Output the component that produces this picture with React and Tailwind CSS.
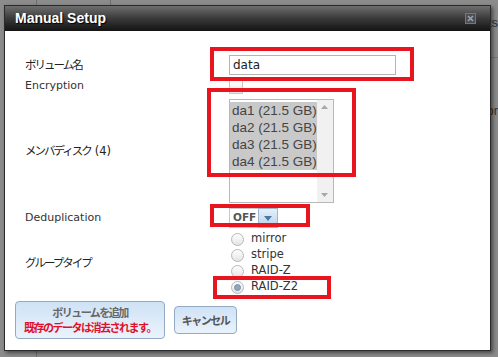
import React from 'react';

const jp = { fontFamily: '"Noto Sans CJK JP", sans-serif' };
const dv = { fontFamily: '"DejaVu Sans", sans-serif' };
const ar = { fontFamily: '"Liberation Sans", Arial, sans-serif' };

const disks = ['da1 (21.5 GB)', 'da2 (21.5 GB)', 'da3 (21.5 GB)', 'da4 (21.5 GB)'];
const types = ['mirror', 'stripe', 'RAID-Z', 'RAID-Z2'];

function Radio({ label, checked }) {
  return (
    <label className="flex items-center h-[16px] gap-[7px]">
      <span className="w-[13px] h-[13px] rounded-full border border-[#b8b8b8] bg-gradient-to-b from-white to-[#e4e4e4] flex items-center justify-center ml-[2px]">
        {checked && <span className="w-[7px] h-[7px] rounded-full bg-[#8fa6bd] border border-[#7b93ab]" />}
      </span>
      <span className="text-[11.5px] text-[#333]" style={dv}>{label}</span>
    </label>
  );
}

function RedBox({ className }) {
  return <div className={`absolute border-[4px] border-[#e8141e] pointer-events-none ${className}`} />;
}

export default function App() {
  return (
    <div className="relative w-[498px] h-[357px] overflow-hidden bg-[#8c8c8c]">
      {/* background page fragments */}
      <div className="absolute left-[36px] top-0 h-[6px] w-px bg-[#6e6e6e]" />
      <div className="absolute left-[110px] top-0 h-[6px] w-px bg-[#6e6e6e]" />
      <div className="absolute left-[36px] bottom-0 h-[7px] w-px bg-[#6e6e6e]" />
      <div className="absolute right-0 top-[13px] text-[13px] text-[#333]" style={ar}>ts</div>
      <div className="absolute right-0 top-[57px] w-[8px] h-px bg-[#777]" />
      <div className="absolute right-0 top-[101px] text-[13px] text-[#333]" style={ar}>or</div>

      {/* dialog */}
      <div className="absolute left-[4px] top-[5px] w-[487px] h-[346px] border border-[#2a2a2a] bg-white shadow-[2px_2px_4px_rgba(0,0,0,0.5)] flex flex-col">
        <div className="h-[25px] bg-gradient-to-b from-[#6f6f6f] via-[#3a3a3a] to-[#141414] flex items-center justify-between pl-[10px] pr-[14px]">
          <span className="text-white font-bold text-[14px] [text-shadow:1px_1px_1px_#000]" style={ar}>Manual Setup</span>
          <svg width="11" height="11" viewBox="0 0 11 11">
            <rect x="0.5" y="0.5" width="10" height="10" fill="#4a4f55" stroke="#6f777f" />
            <path d="M3 3 L8 8 M8 3 L3 8" stroke="#9aa3ab" strokeWidth="1.6" />
          </svg>
        </div>

        <div className="flex-1 pl-[20px] pt-[24px] text-[#222]">
          {/* volume name */}
          <div className="flex items-center h-[20px]">
            <div className="w-[204px] text-[11.5px] tracking-[-2px]" style={jp}>ボリューム名</div>
            <div className="w-[167px] h-[20px] border border-[#b4b4b4] flex items-center pl-[3px] text-[12px] text-[#222]" style={dv}>data</div>
          </div>

          {/* encryption */}
          <div className="flex items-center h-[23px]">
            <div className="w-[204px] text-[11px] text-[#333]" style={dv}>Encryption</div>
            <div className="w-[14px] h-[14px] border border-[#c8c8c8] bg-gradient-to-b from-white to-[#e6e6e6]" />
          </div>

          {/* member disks */}
          <div className="flex items-center mt-[1px]">
            <div className="w-[204px] text-[11.5px] flex items-baseline" style={jp}>
              <span className="tracking-[-2px]">メンバディスク</span>
              <span className="ml-[4px]" style={dv}>(4)</span>
            </div>
            <div className="w-[105px] h-[104px] border border-[#b8b8b8] flex">
              <div className="flex-1 pt-[2px]">
                {disks.map((d) => (
                  <div key={d} className="h-[17px] bg-[#c9c9c9] text-[#444] text-[13.5px] leading-[17px] pl-[2px] whitespace-nowrap" style={ar}>{d}</div>
                ))}
              </div>
              <div className="w-[17px] bg-[#f1f1f1] flex flex-col justify-between items-center py-[5px]">
                <svg width="7" height="4" viewBox="0 0 7 4"><path d="M0 4 L3.5 0 L7 4 Z" fill="#a8a8a8" /></svg>
                <svg width="7" height="4" viewBox="0 0 7 4"><path d="M0 0 L3.5 4 L7 0 Z" fill="#a8a8a8" /></svg>
              </div>
            </div>
          </div>

          {/* dedup */}
          <div className="flex items-center h-[20px] mt-[5px]">
            <div className="w-[204px] text-[11px] text-[#333]" style={dv}>Deduplication</div>
            <div className="flex h-[20px]">
              <div className="w-[29px] border border-[#c8c8c8] border-r-0 flex items-center pl-[3px] text-[10.5px] font-bold text-[#555]" style={dv}>OFF</div>
              <div className="w-[20px] border border-[#9fb6cc] bg-gradient-to-b from-[#e6f0fa] to-[#b9d2ea] flex items-center justify-center">
                <svg width="8" height="5" viewBox="0 0 8 5"><path d="M0 0 L4 5 L8 0 Z" fill="#4b76a8" /></svg>
              </div>
            </div>
          </div>

          {/* group type */}
          <div className="flex items-center mt-[3px]">
            <div className="w-[204px] text-[11.5px] tracking-[-2px]" style={jp}>グループタイプ</div>
            <div className="flex flex-col">
              {types.map((t) => (
                <Radio key={t} label={t} checked={t === 'RAID-Z2'} />
              ))}
            </div>
          </div>

          {/* buttons */}
          <div className="flex items-center gap-[9px] -ml-[10px] mt-[6px]">
            <button className="w-[150px] h-[38px] rounded-[4px] border border-[#93aac2] bg-gradient-to-b from-[#cfe2f5] to-[#eaf3fc] flex flex-col items-center justify-center leading-[15px] font-bold text-[11px] tracking-[-1.5px]" style={jp}>
              <span className="text-[#666]">ボリュームを追加</span>
              <span className="text-[#e0102a]">既存のデータは消去されます。</span>
            </button>
            <button className="w-[63px] h-[28px] rounded-[4px] border border-[#93aac2] bg-gradient-to-b from-[#cfe2f5] to-[#eaf3fc] font-bold text-[11px] tracking-[-1.5px] text-[#555]" style={jp}>
              キャンセル
            </button>
          </div>
        </div>
      </div>

      {/* annotation boxes */}
      <RedBox className="left-[210px] top-[47px] w-[204px] h-[34px]" />
      <RedBox className="left-[207px] top-[88px] w-[149px] h-[89px]" />
      <RedBox className="left-[210px] top-[204px] w-[100px] h-[23px]" />
      <RedBox className="left-[213px] top-[276px] w-[118px] h-[23px]" />
    </div>
  );
}
